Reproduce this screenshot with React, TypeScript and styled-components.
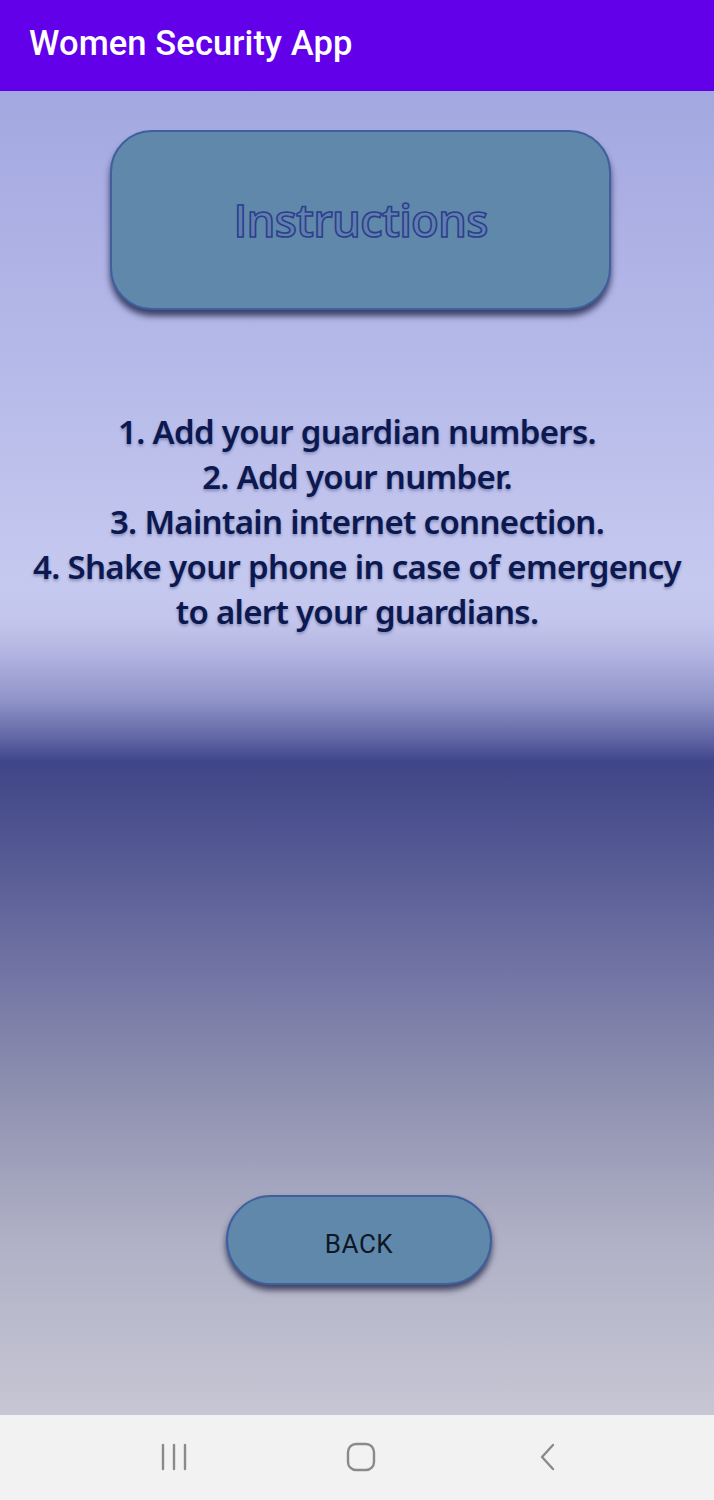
import React from "react";
import styled, { createGlobalStyle } from "styled-components";

const Global = createGlobalStyle`
  html, body { margin: 0; padding: 0; }
  body { width: 714px; height: 1500px; overflow: hidden; }
`;

const Screen = styled.div`
  width: 714px;
  height: 1500px;
  display: flex;
  flex-direction: column;
`;

const AppBar = styled.header`
  height: 91px;
  flex: none;
  background: #6200ea;
  display: flex;
  align-items: center;
  padding-left: 29px;
  box-sizing: border-box;
`;

const AppTitle = styled.h1`
  margin: 0;
  color: #ffffff;
  font-family: Roboto, "Liberation Sans", sans-serif;
  font-weight: 500;
  font-size: 34.5px;
  letter-spacing: 0.1px;
  padding-bottom: 6px;
`;

const Content = styled.main`
  flex: 1;
  display: flex;
  flex-direction: column;
  align-items: center;
  background: linear-gradient(
    to bottom,
    #a3a8e0 0px,
    #b2b6e7 220px,
    #c6c9ef 500px,
    #c3c5ec 530px,
    #b4b6e2 560px,
    #8f93c8 610px,
    #5d62a2 650px,
    #40468a 670px,
    #434989 690px,
    #6a6da0 850px,
    #8e90b0 1000px,
    #b0b1c6 1150px,
    #c6c6d4 1324px
  );
`;

const HeadingCard = styled.div`
  margin-top: 39px;
  margin-left: 7px;
  width: 501px;
  height: 180px;
  box-sizing: border-box;
  border-radius: 42px;
  background: #6088aa;
  border: 2px solid #3f5f9f;
  box-shadow: 0 6px 6px rgba(20, 25, 60, 0.75);
  display: flex;
  align-items: center;
  justify-content: center;
`;

const HeadingText = styled.span`
  font-family: "Open Sans", "Noto Sans", sans-serif;
  font-weight: 600;
  font-size: 45.5px;
  color: #5f7fae;
  -webkit-text-stroke: 1.6px #2c3e8c;
  letter-spacing: -0.8px;
  padding-bottom: 2px;
`;

const Steps = styled.div`
  margin-top: 99px;
  text-align: center;
  font-family: "Noto Sans", "Open Sans", sans-serif;
  font-weight: 600;
  font-size: 33px;
  line-height: 45px;
  color: #0c1850;
  letter-spacing: -0.7px;
  text-shadow: 0 2px 3px rgba(30, 40, 90, 0.35);
`;

const Step = styled.div``;

const Spacer = styled.div`
  flex: 1;
`;

const BackButton = styled.button`
  width: 266px;
  height: 90px;
  margin-left: 4px;
  box-sizing: border-box;
  border-radius: 45px;
  background: #6088aa;
  border: 2px solid #3f5f9f;
  box-shadow: 0 5px 6px rgba(20, 25, 60, 0.75);
  font-family: Roboto, "Liberation Sans", sans-serif;
  font-size: 26px;
  font-weight: 400;
  color: #0f1726;
  letter-spacing: 0.5px;
  margin-bottom: 130px;
  padding: 8px 0 0 0;
`;

const NavBar = styled.nav`
  height: 85px;
  flex: none;
  background: #f2f2f2;
  display: flex;
  align-items: center;
  justify-content: center;
  padding-left: 7px;
`;

const NavSlot = styled.div`
  width: 187px;
  display: flex;
  justify-content: center;
  align-items: center;
  padding-bottom: 2px;
`;

export default function App() {
  return (
    <>
      <Global />
      <Screen>
        <AppBar>
          <AppTitle>Women Security App</AppTitle>
        </AppBar>
        <Content>
          <HeadingCard>
            <HeadingText>Instructions</HeadingText>
          </HeadingCard>
          <Steps>
            <Step>1. Add your guardian numbers.</Step>
            <Step>2. Add your number.</Step>
            <Step>3. Maintain internet connection.</Step>
            <Step>4. Shake your phone in case of emergency</Step>
            <Step>to alert your guardians.</Step>
          </Steps>
          <Spacer />
          <BackButton>BACK</BackButton>
        </Content>
        <NavBar>
          <NavSlot>
            <svg width="28" height="30" viewBox="0 0 28 30">
              <g stroke="#8a8a8a" strokeWidth="2.4" strokeLinecap="round">
                <line x1="3" y1="3" x2="3" y2="27" />
                <line x1="14" y1="3" x2="14" y2="27" />
                <line x1="25" y1="3" x2="25" y2="27" />
              </g>
            </svg>
          </NavSlot>
          <NavSlot>
            <svg width="30" height="30" viewBox="0 0 30 30">
              <rect x="2" y="2" width="26" height="26" rx="8" fill="none" stroke="#8a8a8a" strokeWidth="2.4" />
            </svg>
          </NavSlot>
          <NavSlot>
            <svg width="18" height="30" viewBox="0 0 18 30">
              <polyline points="14,3 3,15 14,27" fill="none" stroke="#8a8a8a" strokeWidth="2.4" strokeLinecap="round" strokeLinejoin="round" />
            </svg>
          </NavSlot>
        </NavBar>
      </Screen>
    </>
  );
}
